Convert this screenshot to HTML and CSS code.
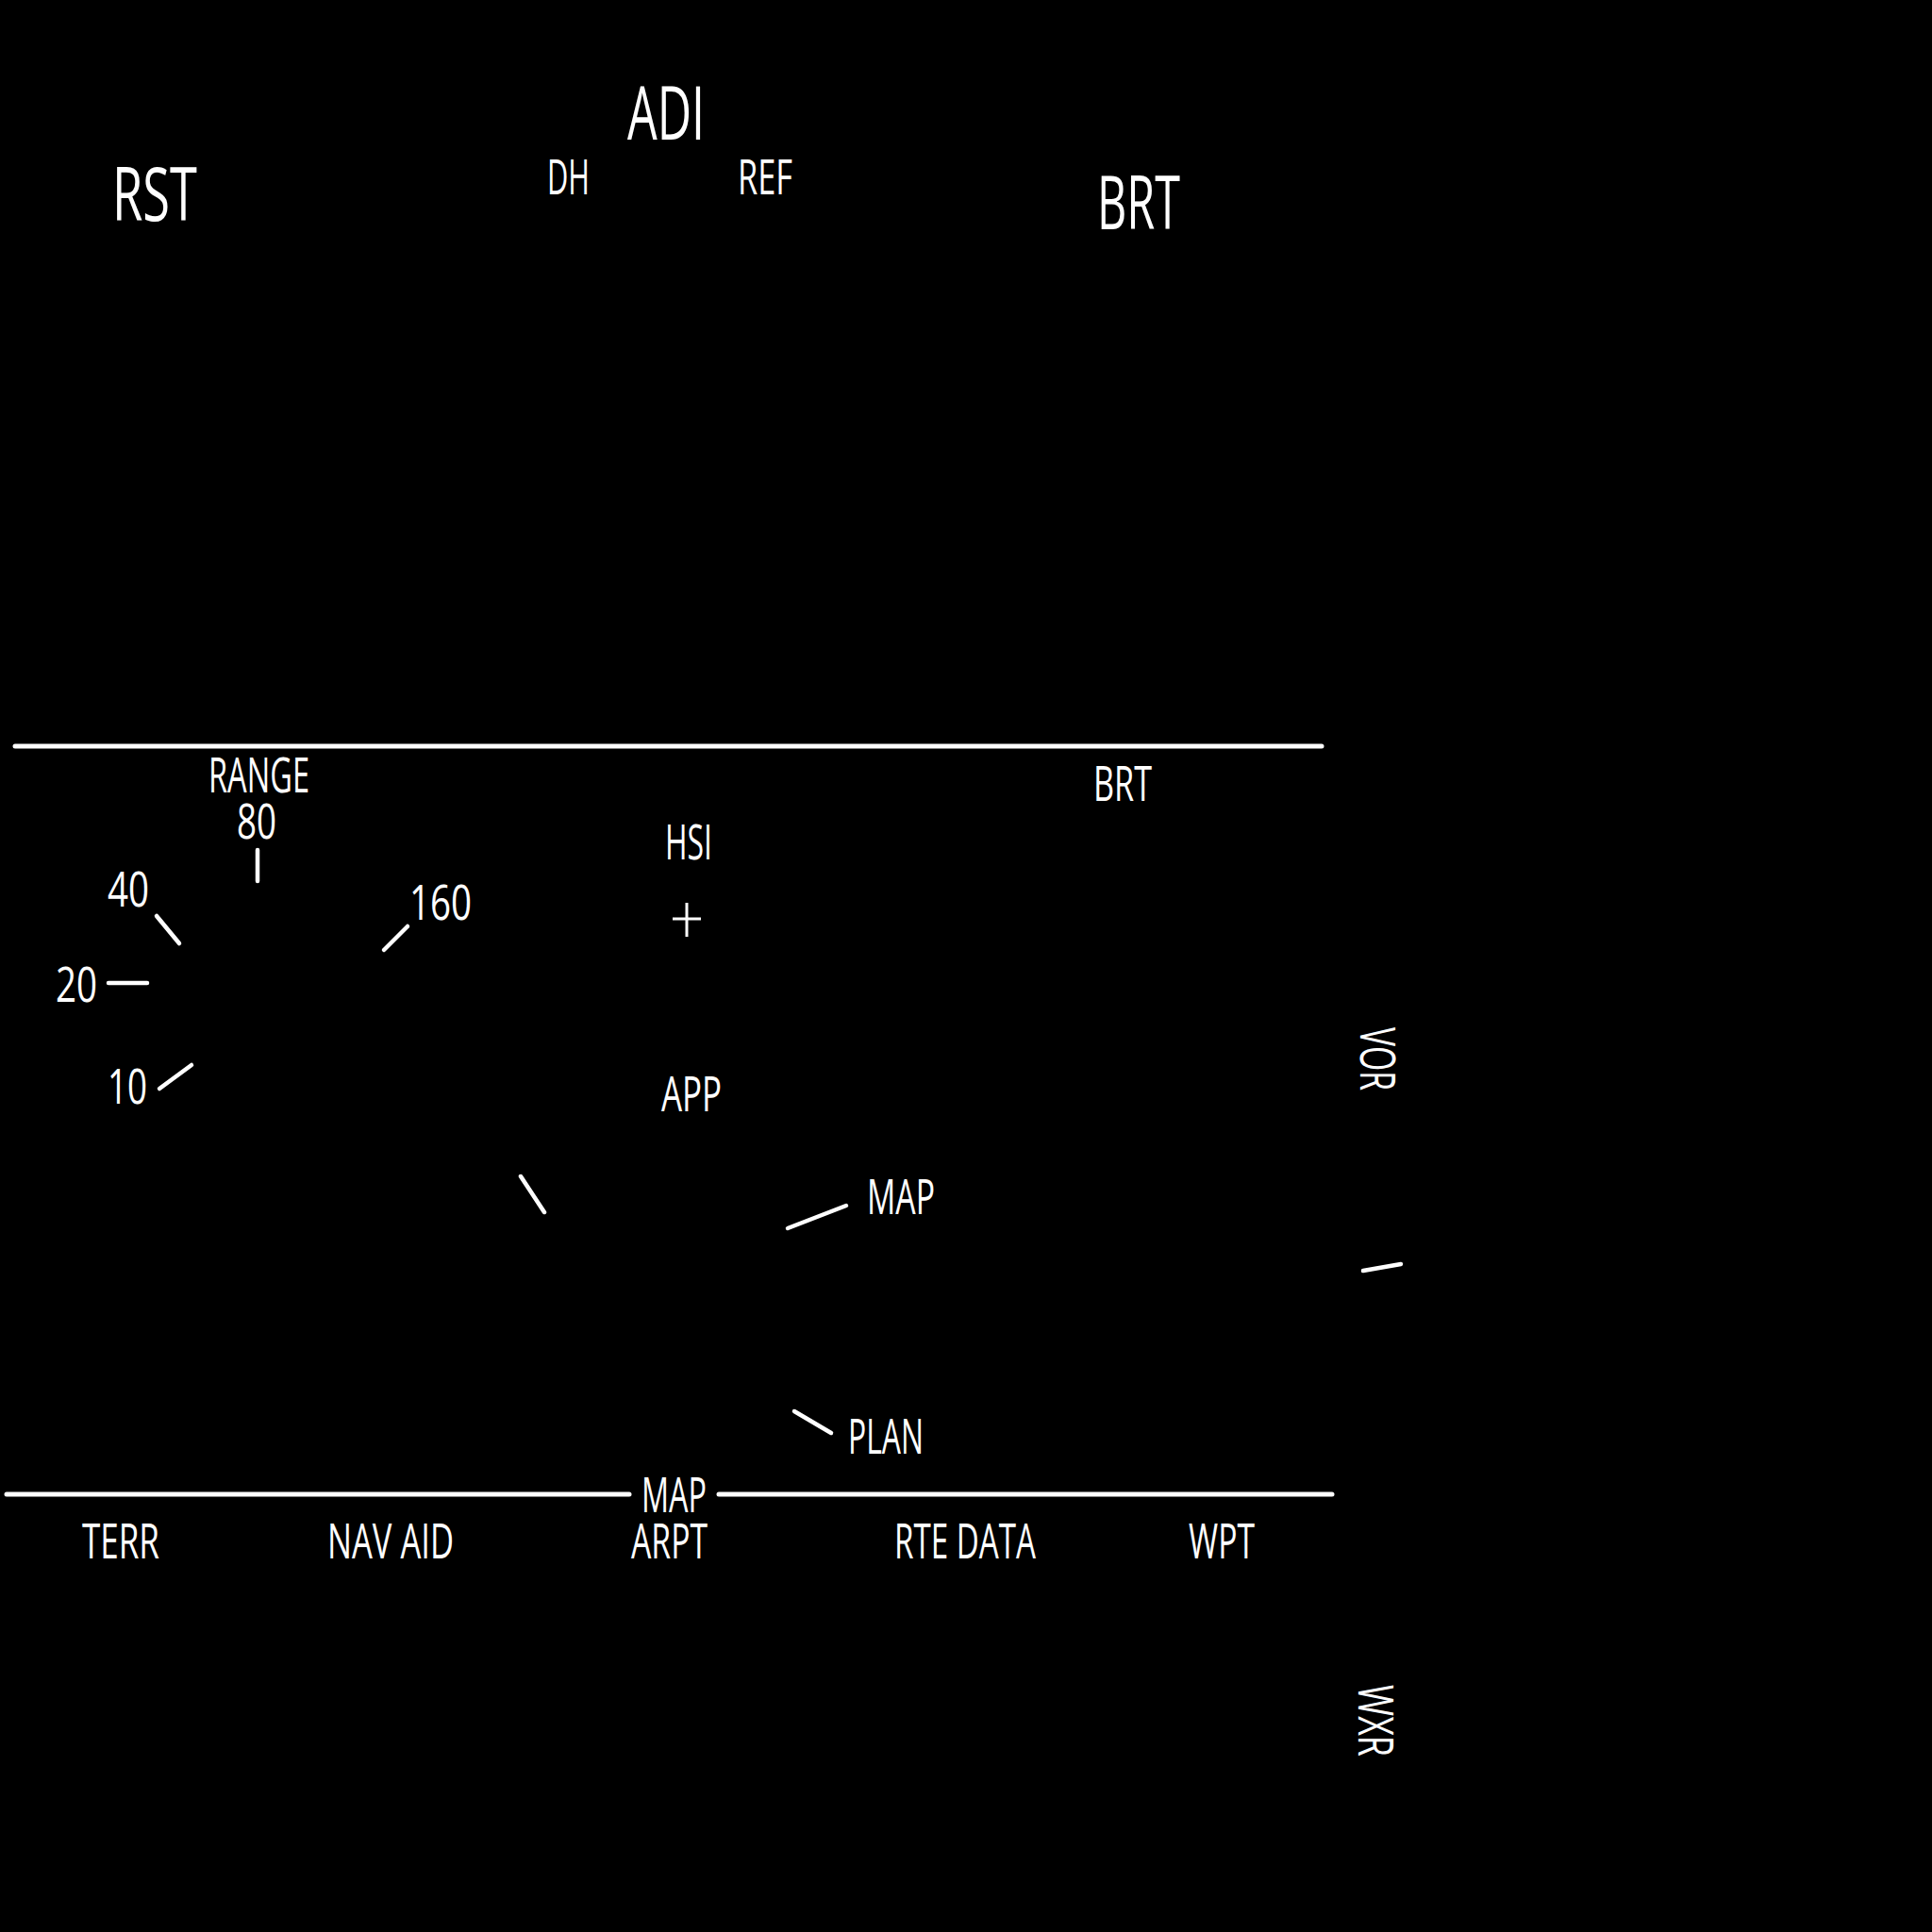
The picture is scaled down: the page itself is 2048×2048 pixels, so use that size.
FILE: index.html
```html
<!DOCTYPE html>
<html lang="en">
<head>
    <meta charset="UTF-8">
    <meta name="viewport" content="width=device-width, initial-scale=1.0">
    <title>Display Control Panel</title>
    <link rel="stylesheet" href="styles.css">
</head>
<body>
    <svg class="panel" width="2048" height="2048" viewBox="0 0 2048 2048">
        <!-- ADI section -->
        <text class="label label-lg" x="665" y="148" textLength="82" lengthAdjust="spacingAndGlyphs">ADI</text>
        <text class="label label-md" x="580" y="206" textLength="45" lengthAdjust="spacingAndGlyphs">DH</text>
        <text class="label label-md" x="782" y="206" textLength="58" lengthAdjust="spacingAndGlyphs">REF</text>
        <text class="label label-lg" x="119" y="234" textLength="90" lengthAdjust="spacingAndGlyphs">RST</text>
        <text class="label label-lg" x="1163" y="243" textLength="88" lengthAdjust="spacingAndGlyphs">BRT</text>

        <line class="rule" x1="16" y1="791" x2="1401" y2="791"/>

        <!-- HSI section: range knob -->
        <text class="label label-md" x="221" y="840" textLength="107" lengthAdjust="spacingAndGlyphs">RANGE</text>
        <text class="label label-md" x="251" y="889" textLength="42" lengthAdjust="spacingAndGlyphs">80</text>
        <line class="tick" x1="273" y1="901" x2="273" y2="934"/>
        <text class="label label-md" x="114" y="961" textLength="44" lengthAdjust="spacingAndGlyphs">40</text>
        <line class="tick" x1="166" y1="971" x2="190" y2="1000"/>
        <text class="label label-md" x="434" y="975" textLength="66" lengthAdjust="spacingAndGlyphs">160</text>
        <line class="tick" x1="407" y1="1007" x2="432" y2="982"/>
        <text class="label label-md" x="59" y="1062" textLength="44" lengthAdjust="spacingAndGlyphs">20</text>
        <line class="tick" x1="115" y1="1042" x2="156" y2="1042"/>
        <text class="label label-md" x="114" y="1170" textLength="42" lengthAdjust="spacingAndGlyphs">10</text>
        <line class="tick" x1="169" y1="1154" x2="203" y2="1129"/>

        <!-- HSI section: mode knob -->
        <text class="label label-md" x="705" y="911" textLength="50" lengthAdjust="spacingAndGlyphs">HSI</text>
        <line class="cross" x1="713" y1="974" x2="743" y2="974"/>
        <line class="cross" x1="728" y1="957" x2="728" y2="993"/>
        <text class="label label-md" x="701" y="1178" textLength="64" lengthAdjust="spacingAndGlyphs">APP</text>
        <line class="tick" x1="552" y1="1247" x2="577" y2="1285"/>
        <line class="tick" x1="835" y1="1302" x2="897" y2="1278"/>
        <text class="label label-md" x="919" y="1287" textLength="72" lengthAdjust="spacingAndGlyphs">MAP</text>
        <line class="tick" x1="842" y1="1496" x2="881" y2="1519"/>
        <text class="label label-md" x="899" y="1541" textLength="80" lengthAdjust="spacingAndGlyphs">PLAN</text>

        <text class="label label-md" x="1159" y="849" textLength="62" lengthAdjust="spacingAndGlyphs">BRT</text>

        <!-- side buttons -->
        <text class="label label-md" transform="translate(1442 1089) rotate(90)" textLength="67" lengthAdjust="spacingAndGlyphs">VOR</text>
        <line class="tick" x1="1445" y1="1347" x2="1485" y2="1340"/>
        <text class="label label-md" transform="translate(1440 1786) rotate(90)" textLength="76" lengthAdjust="spacingAndGlyphs">WXR</text>

        <!-- MAP section -->
        <line class="rule" x1="7" y1="1584" x2="667" y2="1584"/>
        <text class="label label-md" x="680" y="1603" textLength="69" lengthAdjust="spacingAndGlyphs">MAP</text>
        <line class="rule" x1="762" y1="1584" x2="1412" y2="1584"/>
        <text class="label label-md" x="87" y="1652" textLength="82" lengthAdjust="spacingAndGlyphs">TERR</text>
        <text class="label label-md" x="347" y="1652" textLength="134" lengthAdjust="spacingAndGlyphs">NAV AID</text>
        <text class="label label-md" x="669" y="1652" textLength="81" lengthAdjust="spacingAndGlyphs">ARPT</text>
        <text class="label label-md" x="948" y="1652" textLength="150" lengthAdjust="spacingAndGlyphs">RTE DATA</text>
        <text class="label label-md" x="1260" y="1652" textLength="70" lengthAdjust="spacingAndGlyphs">WPT</text>
    </svg>
</body>
</html>
```

FILE: styles.css
```css
body {
    margin: 0;
    background-color: #000000;
}

.panel {
    display: block;
}

.label {
    font-family: "Open Sans", "Liberation Sans", sans-serif;
    font-weight: 400;
    fill: #ffffff;
}

.label-lg {
    font-size: 78px;
}

.label-md {
    font-size: 52px;
}

.rule {
    stroke: #ffffff;
    stroke-width: 5;
    stroke-linecap: round;
}

.tick {
    stroke: #ffffff;
    stroke-width: 4.5;
    stroke-linecap: round;
}

.cross {
    stroke: #ffffff;
    stroke-width: 3;
}
```
